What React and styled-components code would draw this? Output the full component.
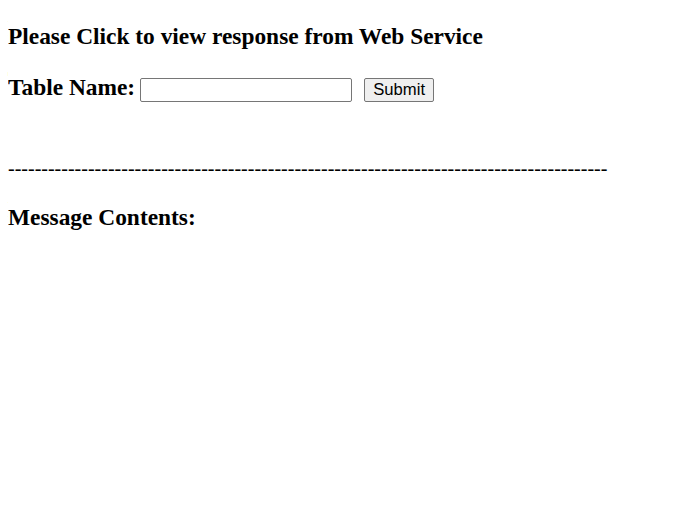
import styled, { createGlobalStyle } from "styled-components";

const Global = createGlobalStyle`
  body {
    margin: 8px;
    font-family: "Liberation Serif", "Times New Roman", serif;
    font-size: 20px;
    color: #000;
    background: #fff;
  }
`;

const Heading = styled.h3`
  font-size: 23.4px;
  line-height: 27px;
  font-weight: bold;
  margin: ${(p) => p.$top || 0}px 0 0;
`;

const FormRow = styled.form`
  display: flex;
  align-items: flex-start;
  margin-top: 23.6px;
`;

const Label = styled.span`
  font-size: 23.4px;
  line-height: 27px;
  font-weight: bold;
  margin-right: 5px;
`;

const Input = styled.input`
  width: 212px;
  height: 24.5px;
  margin-top: 4px;
  box-sizing: border-box;
  border: 1px solid #767676;
  border-radius: 2px;
  padding: 1px 2px;
  font-family: "Liberation Sans", Arial, sans-serif;
  font-size: 16.67px;
`;

const Button = styled.button`
  margin: 4px 0 0 12px;
  width: 70px;
  height: 24.5px;
  padding: 0 8px;
  box-sizing: border-box;
  font-family: "Liberation Sans", Arial, sans-serif;
  font-size: 16.67px;
  color: #000;
  background: #efefef;
  border: 1px solid #767676;
  border-radius: 2px;
`;

const Divider = styled.div`
  margin-top: 55px;
  line-height: 23px;
  white-space: nowrap;
  overflow: hidden;
`;

export default function App() {
  return (
    <>
      <Global />
      <Heading $top={15}>Please Click to view response from Web Service</Heading>
      <FormRow onSubmit={(e) => e.preventDefault()}>
        <Label>Table Name:</Label>
        <Input type="text" />
        <Button type="submit">Submit</Button>
      </FormRow>
      <Divider>{"-".repeat(90)}</Divider>
      <Heading $top={24}>Message Contents:</Heading>
    </>
  );
}
